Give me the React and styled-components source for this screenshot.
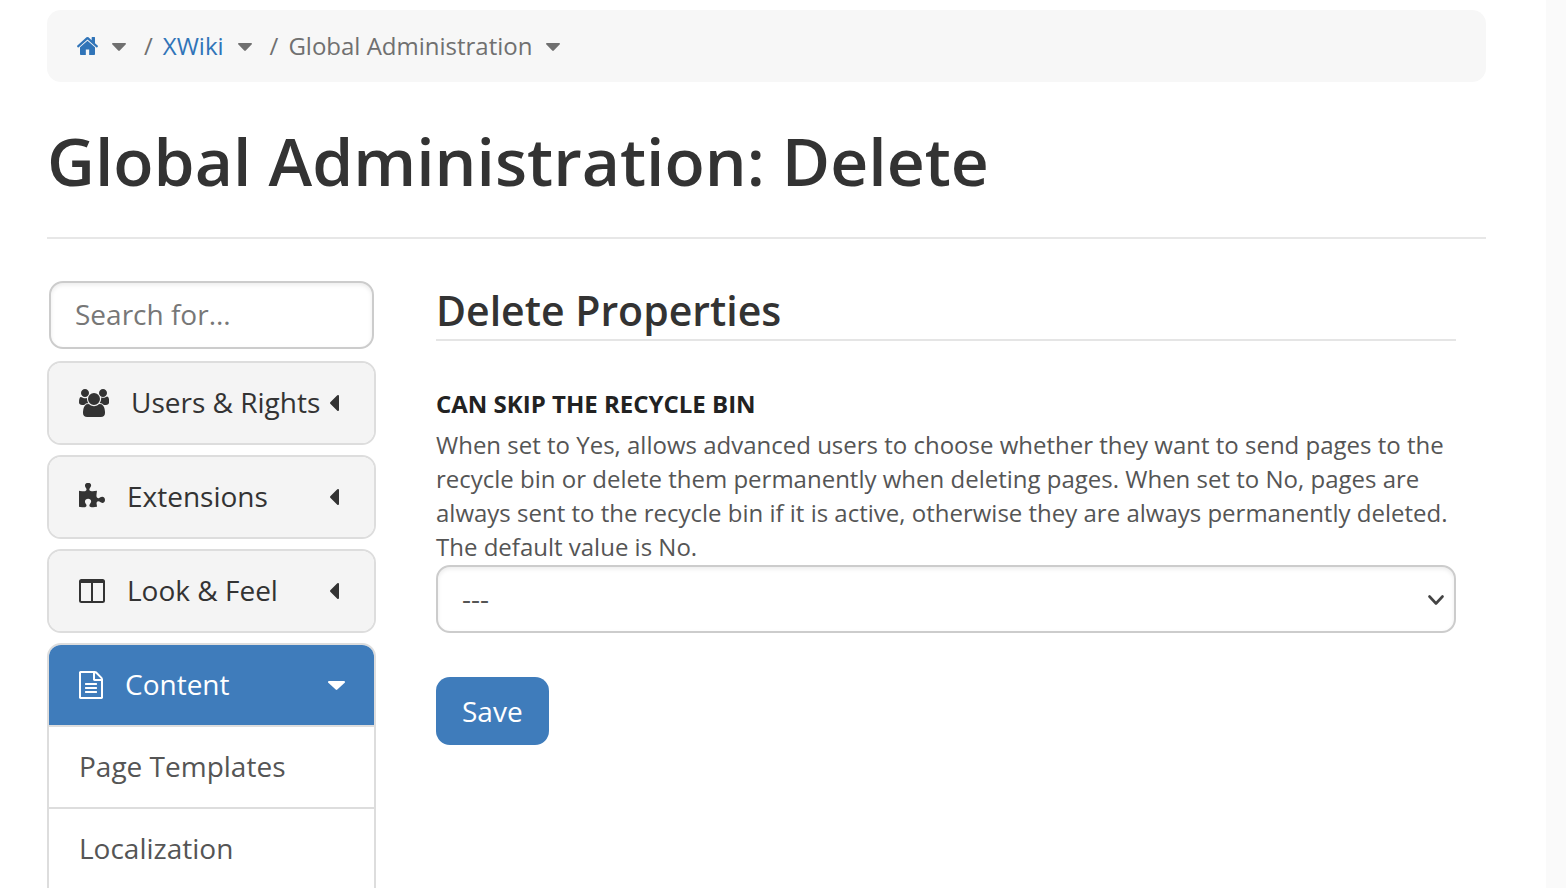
import React from "react";
import styled, { createGlobalStyle } from "styled-components";

const GlobalStyle = createGlobalStyle`
  *, *::before, *::after { box-sizing: border-box; }
  body {
    margin: 0;
    background: #fff;
    color: #555;
    font-family: "Open Sans", "Noto Sans", sans-serif;
    font-size: 28px;
    line-height: 40px;
  }
  button, input, select { font: inherit; }
`;

const Shell = styled.div`
  display: flex;
  height: 100vh;
  overflow: hidden;
`;

const Main = styled.main`
  flex: 1;
  min-width: 0;
  padding: 10px 60px 0 47px;
  overflow-y: auto;
  scrollbar-width: none;
`;

const SideStrip = styled.aside`
  flex: none;
  width: 20px;
  background: #fafafa;
`;

const Breadcrumb = styled.ol`
  display: flex;
  align-items: center;
  height: 72px;
  margin: 0;
  padding: 0 30px;
  list-style: none;
  border-radius: 14px;
  background: #f7f7f7;
  color: #707070;
  font-size: 24px;
  line-height: 34px;
`;

const Crumb = styled.li`
  display: flex;
  align-items: center;

  & + &::before {
    content: "/";
    padding: 0 10px 0 18px;
  }
`;

const CrumbLink = styled.a`
  display: flex;
  color: #3074b8;
  text-decoration: none;
`;

const CrumbToggle = styled.button`
  display: flex;
  margin: 2px 0 0 14px;
  padding: 0;
  border: 0;
  background: none;
  color: #707070;
`;

const Title = styled.h1`
  margin: 28px 0 0;
  padding-bottom: 27px;
  border-bottom: 2px solid #e7e7e7;
  color: #333;
  font-size: 66px;
  font-weight: 600;
  line-height: 100px;
`;

const Columns = styled.div`
  display: flex;
  align-items: flex-start;
  gap: 60px;
  margin-top: 42px;
  padding-right: 30px;
`;

const Nav = styled.nav`
  flex: none;
  width: 329px;
  display: flex;
  flex-direction: column;
  gap: 10px;
`;

const SearchInput = styled.input`
  height: 68px;
  margin: 0 2px 2px;
  padding: 0 24px 2px;
  border: 2px solid #ccc;
  border-radius: 14px;
  background: #fff;
  color: #555;
  box-shadow: inset 0 2px 4px rgba(0, 0, 0, 0.08);

  &::placeholder { color: #777; opacity: 1; }
`;

const Panel = styled.section`
  border: 2px solid #ddd;
  border-radius: 14px;
  overflow: hidden;
`;

const PanelHeader = styled.button`
  display: flex;
  align-items: center;
  gap: 22px;
  width: 100%;
  height: 80px;
  margin: 0;
  padding: 0 29px 0 30px;
  border: 0;
  background: ${(p) => (p.$open ? "#3f7cbb" : "#f4f4f4")};
  color: ${(p) => (p.$open ? "#fff" : "#333")};
  white-space: nowrap;
`;

const CaretSlot = styled.span`
  display: flex;
  flex: none;
  width: 17px;
  margin-left: auto;
`;

const PanelLabel = styled.span`
  margin-right: -22px;
  padding-bottom: 2px;
`;

const PanelList = styled.ul`
  margin: 0;
  padding: 0 0 20px;
  list-style: none;
`;

const PanelLink = styled.a`
  display: block;
  padding: 19px 30px 21px;
  border-top: 2px solid #ddd;
  color: #555;
  text-decoration: none;
`;

const Content = styled.form`
  flex: 1;
  min-width: 0;
`;

const SectionTitle = styled.h2`
  margin: 0;
  border-bottom: 2px solid #e5e5e5;
  color: #333;
  font-size: 41px;
  font-weight: 600;
  line-height: 58px;
`;

const FieldLabel = styled.label`
  display: block;
  margin-top: 46px;
  color: #222;
  font-size: 24px;
  font-weight: 700;
  line-height: 34px;
  text-transform: uppercase;
`;

const Hint = styled.p`
  margin: 7px 0 0;
  color: #555;
  font-size: 24px;
  line-height: 34px;
`;

const SelectWrap = styled.div`
  display: grid;
  align-items: center;
  margin-top: 1px;

  & > * { grid-area: 1 / 1; }
  & > svg { justify-self: end; margin: 2px 12px 0 0; pointer-events: none; }
`;

const Select = styled.select`
  appearance: none;
  width: 100%;
  height: 68px;
  padding: 0 24px 2px;
  border: 2px solid #ccc;
  border-radius: 14px;
  background: #fff;
  color: #555;
  box-shadow: inset 0 2px 4px rgba(0, 0, 0, 0.08);
`;

const SaveButton = styled.button`
  height: 68px;
  margin: 44px 0 0;
  padding: 0 26px;
  border: 0;
  border-radius: 14px;
  background: #3f7cbb;
  color: #fff;
`;

const Icon = styled.svg`
  display: block;
  flex: none;
  fill: currentColor;
`;

const HomeIcon = () => (
  <Icon width="21" height="18" viewBox="89 253 1614 1283" preserveAspectRatio="none" role="img" aria-label="Home">
    <path d="M1472 992v480q0 26-19 45t-45 19h-384v-384h-256v384h-384q-26 0-45-19t-19-45v-480q0-1 .5-3t.5-3l575-474 575 474q1 2 1 6zm223-69l-62 74q-8 9-21 11h-3q-13 0-21-7l-692-577-692 577q-12 8-24 7-13-2-21-11l-62-74q-8-10-7-23.5t11-21.5l719-599q32-26 76-26t76 26l244 204v-195q0-14 9-23t23-9h192q14 0 23 9t9 23v408l219 182q10 8 11 21.5t-7 23.5z" />
  </Icon>
);

const UsersIcon = () => (
  <Icon width="30" height="28" viewBox="64 0 1920 1792">
    <path d="M657 896q-162 5-265 128h-134q-82 0-138-40.5t-56-118.5q0-353 124-353 6 0 43.5 21t97.5 42.5 119 21.5q67 0 133-23-5 37-5 66 0 159 93 290zm1071 637q0 120-73 189.5t-194 69.5h-874q-121 0-194-69.5t-73-189.5q0-53 3.5-103.5t14-109 26.5-108.5 43-97.5 62-81 85.5-53.5 111.5-20q10 0 43 21.5t73 48 107 48 135 21.5 135-21.5 107-48 73-48 43-21.5q61 0 111.5 20t85.5 53.5 62 81 43 97.5 26.5 108.5 14 109 3.5 103.5zm-1024-1277q0 106-75 181t-181 75-181-75-75-181 75-181 181-75 181 75 75 181zm704 384q0 159-112.5 271.5t-271.5 112.5-271.5-112.5-112.5-271.5 112.5-271.5 271.5-112.5 271.5 112.5 112.5 271.5zm576 225q0 78-56 118.5t-138 40.5h-134q-103-123-265-128 93-131 93-290 0-29-5-66 66 23 133 23 59 0 119-21.5t97.5-42.5 43.5-21q124 0 124 353zm-128-609q0 106-75 181t-181 75-181-75-75-181 75-181 181-75 181 75 75 181z" />
  </Icon>
);

const PuzzleIcon = () => (
  <Icon width="26" height="28" viewBox="91 0 1664 1792">
    <path d="M1755 1083q0 81-44.5 135t-123.5 54q-41 0-77.5-17.5t-59-38-56.5-38-71-17.5q-110 0-110 124 0 39 16 115t15 115v5q-22 0-33 1-34 3-97.5 11.5t-115.5 13.5-98 5q-61 0-103-26.5t-42-83.5q0-37 17.5-71t38-56.5 38-59 17.5-77.5q0-79-54-123.5t-135-44.5q-84 0-143 45.5t-59 127.5q0 43 15 83t33.5 64.5 33.5 53 15 50.5q0 45-46 89-37 35-117 35-95 0-245-24-9-2-27.5-4t-27.5-4l-13-2q-1 0-3-1-2 0-2-1v-1024q2 1 17.5 3.5t34 5 21.5 3.5q150 24 245 24 80 0 117-35 46-44 46-89 0-22-15-50.5t-33.5-53-33.5-64.5-15-83q0-82 59-127.5t144-45.5q80 0 134 44.5t54 123.5q0 41-17.5 77.5t-38 59-38 56.5-17.5 71q0 57 42 83.5t103 26.5q64 0 180-15t163-17v2q-1 2-3.5 17.5t-5 34-3.5 21.5q-24 150-24 245 0 80 35 117 44 46 89 46 22 0 50.5-15t53-33.5 64.5-33.5 83-15q82 0 127.5 59t45.5 143z" />
  </Icon>
);

const ColumnsIcon = () => (
  <Icon width="26" height="24" viewBox="0 0 26 24">
    <path
      fillRule="evenodd"
      d="M2.5 0h21A2.5 2.5 0 0 1 26 2.500v19a2.5 2.5 0 0 1-2.500 2.500h-21A2.500 2.500 0 0 1 0 21.500v-19A2.500 2.500 0 0 1 2.500 0zM2 4v17.500a.5.5 0 0 0 .5.5H12V4zM14 4v18h9.500a.5.5 0 0 0 .5-.5V4z"
    />
  </Icon>
);

const FileIcon = () => (
  <Icon width="24" height="28" viewBox="128 0 1536 1792">
    <path d="M1596 380q28 28 48 76t20 88v1152q0 40-28 68t-68 28h-1344q-40 0-68-28t-28-68v-1600q0-40 28-68t68-28h896q40 0 88 20t76 48zm-444-244v376h376q-10-29-22-41l-313-313q-12-12-41-22zm384 1528v-1024h-416q-40 0-68-28t-28-68v-416h-768v1536h1280zm-1024-864q0-14 9-23t23-9h704q14 0 23 9t9 23v64q0 14-9 23t-23 9h-704q-14 0-23-9t-9-23v-64zm736 224q14 0 23 9t9 23v64q0 14-9 23t-23 9h-704q-14 0-23-9t-9-23v-64q0-14 9-23t23-9h704zm0 256q14 0 23 9t9 23v64q0 14-9 23t-23 9h-704q-14 0-23-9t-9-23v-64q0-14 9-23t23-9h704z" />
  </Icon>
);

const CrumbCaret = () => (
  <Icon width="14" height="8" viewBox="0 0 14 8">
    <path d="M1 0h12q1 0 1 .8 0 .4-.4.8L7.800 7.600q-.8.700-1.600 0L.4 1.600Q0 1.200 0 .8 0 0 1 0z" />
  </Icon>
);

const CaretLeft = () => (
  <Icon width="11" height="16" viewBox="0 0 11 16">
    <path d="M11 1v14q0 1-.9 1-.5 0-.8-.3L2.300 8.700q-.6-.7 0-1.400L9.300.3q.3-.3.8-.3.9 0 .9 1z" />
  </Icon>
);

const CaretDown = () => (
  <Icon width="17" height="9" viewBox="0 0 17 9">
    <path d="M1 0h15q1 0 1 .9 0 .5-.3.8L9.300 8.600q-.8.700-1.600 0L.3 1.700Q0 1.400 0 .9 0 0 1 0z" />
  </Icon>
);

const ChevronDown = () => (
  <Icon width="16" height="12" viewBox="0 0 16 12">
    <path d="M1.500 2.500l6.500 7 6.500-7" fill="none" stroke="#444" strokeWidth="2.600" strokeLinecap="round" strokeLinejoin="round" />
  </Icon>
);

const sections = [
  { label: "Users & Rights", Glyph: UsersIcon },
  { label: "Extensions", Glyph: PuzzleIcon },
  { label: "Look & Feel", Glyph: ColumnsIcon },
  { label: "Content", Glyph: FileIcon, items: ["Page Templates", "Localization"] },
];

function NavPanel({ label, Glyph, items }) {
  const open = Boolean(items);
  return (
    <Panel>
      <PanelHeader type="button" $open={open} aria-expanded={open}>
        <Glyph />
        <PanelLabel>{label}</PanelLabel>
        <CaretSlot>{open ? <CaretDown /> : <CaretLeft />}</CaretSlot>
      </PanelHeader>
      {open && (
        <PanelList>
          {items.map((item) => (
            <li key={item}>
              <PanelLink href="#">{item}</PanelLink>
            </li>
          ))}
        </PanelList>
      )}
    </Panel>
  );
}

function CrumbMenu({ label }) {
  return (
    <CrumbToggle type="button" aria-label={label}>
      <CrumbCaret />
    </CrumbToggle>
  );
}

export default function App() {
  return (
    <>
      <GlobalStyle />
      <Shell>
        <Main>
          <nav aria-label="Breadcrumb">
            <Breadcrumb>
              <Crumb>
                <CrumbLink href="#"><HomeIcon /></CrumbLink>
                <CrumbMenu label="Home pages" />
              </Crumb>
              <Crumb>
                <CrumbLink href="#">XWiki</CrumbLink>
                <CrumbMenu label="XWiki pages" />
              </Crumb>
              <Crumb>
                <span>Global Administration</span>
                <CrumbMenu label="Global Administration pages" />
              </Crumb>
            </Breadcrumb>
          </nav>
          <Title>Global Administration: Delete</Title>
          <Columns>
            <Nav aria-label="Administration sections">
              <SearchInput type="text" placeholder="Search for..." aria-label="Search for..." />
              {sections.map((s) => (
                <NavPanel key={s.label} {...s} />
              ))}
            </Nav>
            <Content onSubmit={(e) => e.preventDefault()}>
              <SectionTitle>Delete Properties</SectionTitle>
              <FieldLabel htmlFor="skip-bin">Can skip the recycle bin</FieldLabel>
              <Hint>
                When set to Yes, allows advanced users to choose whether they want to send pages to
                the recycle bin or delete them permanently when deleting pages. When set to No,
                pages are always sent to the recycle bin if it is active, otherwise they are always
                permanently deleted. The default value is No.
              </Hint>
              <SelectWrap>
                <Select id="skip-bin" defaultValue="">
                  <option value="">---</option>
                  <option value="1">Yes</option>
                  <option value="0">No</option>
                </Select>
                <ChevronDown />
              </SelectWrap>
              <SaveButton type="submit">Save</SaveButton>
            </Content>
          </Columns>
        </Main>
        <SideStrip />
      </Shell>
    </>
  );
}
